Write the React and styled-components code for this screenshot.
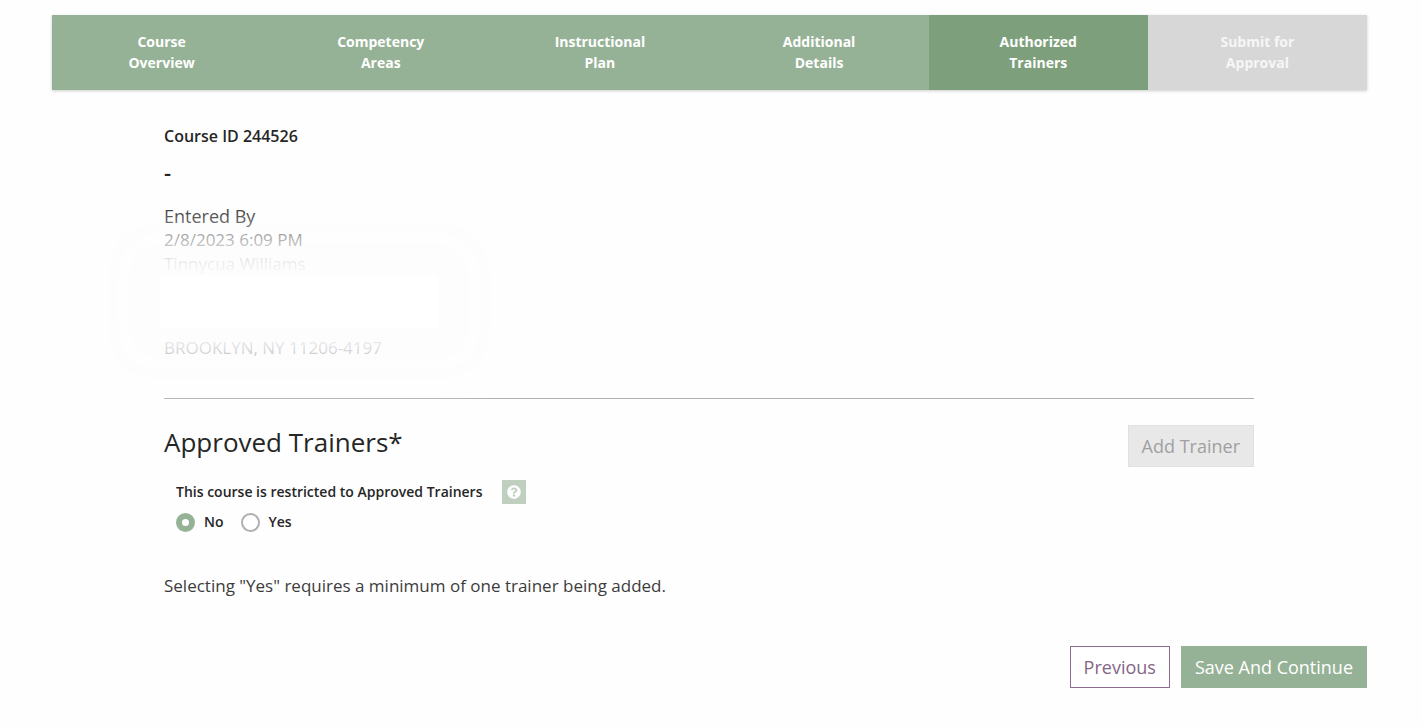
import { useState } from "react";
import styled, { createGlobalStyle } from "styled-components";
import { FaQuestionCircle } from "react-icons/fa";

const GlobalStyle = createGlobalStyle`
  * {
    box-sizing: border-box;
  }
  body {
    margin: 0;
    background-color: #fefefe;
    color: #262626;
    font-family: "Open Sans", "Noto Sans", sans-serif;
    font-size: 17px;
    line-height: 24px;
  }
`;

const Page = styled.div`
  padding: 15px 55px 39px 52px;
`;

const Steps = styled.nav`
  display: grid;
  grid-template-columns: repeat(6, 1fr);
  box-shadow: 0 1px 3px rgba(0, 0, 0, 0.2);
`;

const colors = {
  done: "#96b296",
  current: "#7d9f7b",
  disabled: "#d7d7d7",
};

const Step = styled.a`
  display: flex;
  flex-direction: column;
  align-items: center;
  justify-content: center;
  height: 75px;
  padding-bottom: 2px;
  background-color: ${({ $state }) => colors[$state]};
  color: ${({ $state }) => ($state === "disabled" ? "#f6f6f6" : "white")};
  font-size: 14px;
  font-weight: 700;
  line-height: 21px;
  text-decoration: none;
`;

const Content = styled.main`
  padding: 34px 113px 0 112px;
`;

const CourseInfo = styled.section`
  position: relative;
  padding-bottom: 38px;
  border-bottom: 1px solid #adb0ad;
`;

const CourseId = styled.h1`
  margin: 0;
  font-size: 16px;
  font-weight: 600;
  line-height: 24px;
`;

const CourseName = styled.p`
  margin: 12px 0 20px;
  font-size: 22px;
  font-weight: 600;
  line-height: 24px;
`;

const EnteredBy = styled.h2`
  margin: 0;
  font-size: 18px;
  font-weight: 400;
  line-height: 24px;
`;

const Line = styled.p`
  margin: 0;
  color: #404040;
`;

const Address = styled.div`
  padding-top: 60px;
`;

const Cover = styled.div`
  position: absolute;
  top: 151px;
  left: -4px;
  width: 278px;
  height: 53px;
  background-color: white;
  box-shadow: 0 0 44px 42px #fdfdfe;
`;

const TrainersHeader = styled.div`
  display: flex;
  justify-content: space-between;
  margin-top: 26px;
`;

const Title = styled.h2`
  margin: 0;
  font-size: 26px;
  font-weight: 400;
  line-height: 34px;
`;

const Button = styled.button`
  height: 42px;
  padding: 0 13px;
  border: 1px solid ${({ $border }) => $border};
  background-color: ${({ $bg }) => $bg};
  color: ${({ $color }) => $color};
  font-family: inherit;
  font-size: 18px;
  line-height: 24px;
`;

const Restriction = styled.fieldset`
  margin: 13px 0 0;
  padding: 0 0 0 12px;
  border: none;
`;

const Legend = styled.legend`
  display: flex;
  align-items: center;
  gap: 20px;
  padding: 0;
  font-size: 14px;
  font-weight: 600;
  line-height: 24px;
`;

const Help = styled.button`
  display: flex;
  align-items: center;
  justify-content: center;
  width: 24px;
  height: 24px;
  padding: 0;
  border: none;
  background-color: #c0d0c0;
  color: white;
  font-size: 14px;
`;

const Options = styled.div`
  display: flex;
  gap: 17px;
  padding-top: 6px;
`;

const Option = styled.label`
  display: flex;
  align-items: center;
  gap: 9px;
  font-size: 14px;
  font-weight: 600;
  line-height: 24px;
`;

const Radio = styled.input`
  appearance: none;
  width: 19px;
  height: 19px;
  margin: 0;
  border: 2px solid #b0b0b0;
  border-radius: 50%;
  background-color: white;
  &:checked {
    border: 6px solid #96b296;
  }
`;

const Note = styled.p`
  margin: 40px 0 0;
  color: #3c3c3c;
`;

const Actions = styled.footer`
  display: flex;
  justify-content: flex-end;
  gap: 11px;
  margin-top: 48px;
`;

const steps = [
  { lines: ["Course", "Overview"], state: "done" },
  { lines: ["Competency", "Areas"], state: "done" },
  { lines: ["Instructional", "Plan"], state: "done" },
  { lines: ["Additional", "Details"], state: "done" },
  { lines: ["Authorized", "Trainers"], state: "current" },
  { lines: ["Submit for", "Approval"], state: "disabled" },
];

const App = () => {
  const [restricted, setRestricted] = useState("No");
  return (
    <Page>
      <GlobalStyle />
      <Steps>
        {steps.map(({ lines, state }) => (
          <Step key={lines[0]} href="#" $state={state}>
            <span>{lines[0]}</span>
            <span>{lines[1]}</span>
          </Step>
        ))}
      </Steps>
      <Content>
        <CourseInfo>
          <CourseId>Course ID 244526</CourseId>
          <CourseName>-</CourseName>
          <EnteredBy>Entered By</EnteredBy>
          <Line>2/8/2023 6:09 PM</Line>
          <Line>Tinnycua Williams</Line>
          <Address>
            <Line>BROOKLYN, NY 11206-4197</Line>
          </Address>
          <Cover />
        </CourseInfo>
        <TrainersHeader>
          <Title>Approved Trainers*</Title>
          <Button disabled $bg="#e8e8e8" $border="#e0e0e0" $color="#a0a0a0">
            Add Trainer
          </Button>
        </TrainersHeader>
        <Restriction>
          <Legend>
            This course is restricted to Approved Trainers
            <Help type="button" aria-label="Help">
              <FaQuestionCircle />
            </Help>
          </Legend>
          <Options>
            {["No", "Yes"].map((value) => (
              <Option key={value}>
                <Radio
                  type="radio"
                  name="restricted"
                  value={value}
                  checked={restricted === value}
                  onChange={() => setRestricted(value)}
                />
                {value}
              </Option>
            ))}
          </Options>
        </Restriction>
        <Note>
          Selecting "Yes" requires a minimum of one trainer being added.
        </Note>
      </Content>
      <Actions>
        <Button $bg="white" $border="#8f6b8f" $color="#856585">
          Previous
        </Button>
        <Button $bg="#96b296" $border="#96b296" $color="white">
          Save And Continue
        </Button>
      </Actions>
    </Page>
  );
};

export default App;
